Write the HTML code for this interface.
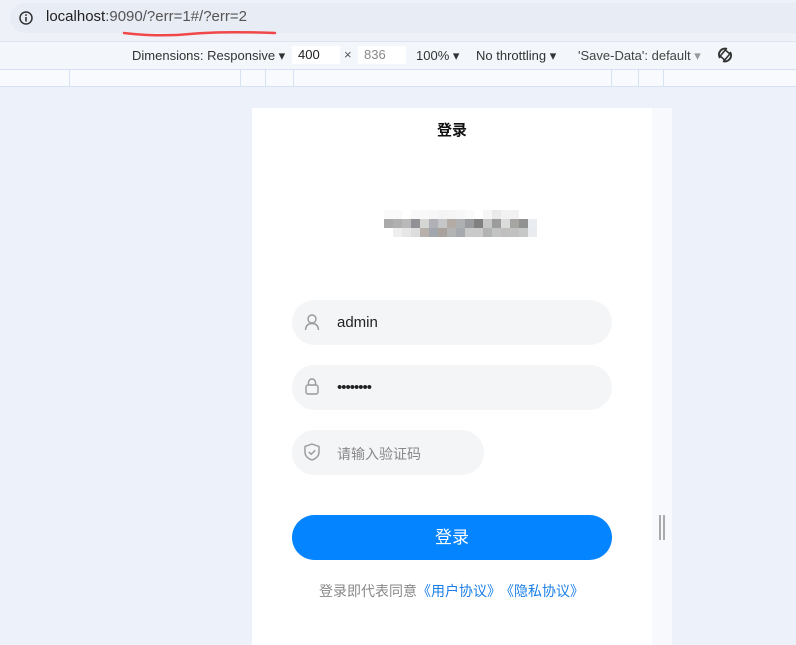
<!DOCTYPE html>
<html><head><meta charset="utf-8"><style>
*{margin:0;padding:0;box-sizing:border-box}
body{width:796px;height:645px;overflow:hidden;background:#edf1f9;font-family:"Liberation Sans","Noto Sans CJK SC",sans-serif;position:relative}
.abs{position:absolute}
.g i{display:block}
</style></head><body>
<div class="abs" style="left:0;top:0;width:796px;height:40px;background:#eef1f8"></div>
<div class="abs" style="left:10px;top:3px;width:786px;height:30px;background:#e8ecf5;border-radius:15px 0 0 15px"></div>
<svg class="abs" style="left:18px;top:10px" width="16" height="16" viewBox="0 0 16 16"><circle cx="8" cy="8" r="6" fill="none" stroke="#333" stroke-width="1.5"/><rect x="7.2" y="7" width="1.6" height="4.5" fill="#333"/><rect x="7.2" y="4.3" width="1.6" height="1.6" fill="#333"/></svg>
<div class="abs" style="left:46px;top:8px;font-size:15px;color:#1f1f1f;white-space:nowrap">localhost<span style="color:#555">:9090/?err=1#/?err=2</span></div>
<svg class="abs" style="left:120px;top:26px" width="160" height="14"><path d="M4 7 Q40 11 70 8 T155 7" stroke="#f04848" stroke-width="2.5" fill="none" stroke-linecap="round"/></svg>
<div class="abs" style="left:0;top:41px;width:796px;height:28px;background:#f3f6fb;border-top:1px solid #dfe4ee"></div>
<div class="abs" style="left:132px;top:48px;font-size:13px;color:#333;white-space:nowrap">Dimensions: Responsive ▾</div>
<div class="abs" style="left:292px;top:46px;width:48px;height:18px;background:#fff;font-size:13px;padding:1px 6px;color:#222">400</div>
<div class="abs" style="left:344px;top:47px;font-size:13px;color:#555">×</div>
<div class="abs" style="left:358px;top:46px;width:48px;height:18px;background:#fff;font-size:13px;padding:1px 6px;color:#888">836</div>
<div class="abs" style="left:416px;top:48px;font-size:13px;color:#333;white-space:nowrap">100% ▾</div>
<div class="abs" style="left:476px;top:48px;font-size:13px;color:#333;white-space:nowrap">No throttling ▾</div>
<div class="abs" style="left:578px;top:48px;font-size:13px;color:#444;white-space:nowrap">'Save-Data': default <span style="color:#999">▾</span></div>
<svg class="abs" style="left:715px;top:45px" width="20" height="20" viewBox="0 0 20 20"><g fill="none" stroke="#333" stroke-width="2"><path d="M5 13 A6 6 0 0 1 12 4"/><path d="M15 7 A6 6 0 0 1 8 16"/><rect x="7" y="6" width="6" height="8" transform="rotate(40 10 10)" stroke-width="1.6"/></g></svg>
<div class="abs" style="left:0;top:69px;width:796px;height:18px;background:#f8fafd;border-top:1px solid #d6e2f3;border-bottom:1px solid #d6e2f3"></div>
<div class="abs" style="left:69px;top:69px;width:1px;height:18px;background:#d6e2f3"></div>
<div class="abs" style="left:240px;top:69px;width:1px;height:18px;background:#d6e2f3"></div>
<div class="abs" style="left:265px;top:69px;width:1px;height:18px;background:#d6e2f3"></div>
<div class="abs" style="left:293px;top:69px;width:1px;height:18px;background:#d6e2f3"></div>
<div class="abs" style="left:611px;top:69px;width:1px;height:18px;background:#d6e2f3"></div>
<div class="abs" style="left:638px;top:69px;width:1px;height:18px;background:#d6e2f3"></div>
<div class="abs" style="left:663px;top:69px;width:1px;height:18px;background:#d6e2f3"></div>

<div class="abs" style="left:252px;top:108px;width:400px;height:537px;background:#fff"></div>
<div class="abs" style="left:652px;top:108px;width:20px;height:537px;background:#f7f9fd"></div>
<div class="abs" style="left:659px;top:515px;width:2px;height:25px;background:#aaa"></div>
<div class="abs" style="left:663px;top:515px;width:2px;height:25px;background:#aaa"></div>
<div class="abs" style="left:252px;top:119px;width:400px;text-align:center;font-size:15px;font-weight:bold;color:#111">登录</div>

<div class="abs g" style="left:384px;top:210px;display:grid;grid-template-columns:repeat(17,9px);grid-template-rows:repeat(3,9px)">
<i style="background:#fafafa"></i><i style="background:#fafafa"></i><i style="background:#fff"></i><i style="background:#f9f9f9"></i><i style="background:#f8f8f8"></i><i style="background:#f7f7f7"></i><i style="background:#f4f4f4"></i><i style="background:#f5f5f5"></i><i style="background:#f7f7f7"></i><i style="background:#fafafa"></i><i style="background:#fff"></i><i style="background:#f6f6f6"></i><i style="background:#e9eaec"></i><i style="background:#f2f2f2"></i><i style="background:#f2f2f2"></i><i style="background:#fff"></i><i style="background:#fff"></i>
<i style="background:#aaa"></i><i style="background:#b0b0b0"></i><i style="background:#b9b9b9"></i><i style="background:#929296"></i><i style="background:#d5d7d5"></i><i style="background:#b0b0b6"></i><i style="background:#c4c6c7"></i><i style="background:#b3aba5"></i><i style="background:#aeb0b1"></i><i style="background:#9a9b9e"></i><i style="background:#808080"></i><i style="background:#c7c7c7"></i><i style="background:#9c9c9c"></i><i style="background:#dadcdb"></i><i style="background:#a7a5a1"></i><i style="background:#919191"></i><i style="background:#e9edf2"></i>
<i style="background:#fff"></i><i style="background:#eee"></i><i style="background:#e6e6e6"></i><i style="background:#ddd"></i><i style="background:#b8b0aa"></i><i style="background:#a2a6ad"></i><i style="background:#aaa39d"></i><i style="background:#b2b3b3"></i><i style="background:#a6a9ae"></i><i style="background:#c9c9c9"></i><i style="background:#cacaca"></i><i style="background:#b2b3b4"></i><i style="background:#c2c3c3"></i><i style="background:#c0bfbd"></i><i style="background:#c1c1c1"></i><i style="background:#c6c7c7"></i><i style="background:#e9ebee"></i>
</div>

<div class="abs" style="left:292px;top:300px;width:320px;height:45px;background:#f4f5f7;border-radius:23px"></div>
<svg class="abs" style="left:302px;top:312px" width="20" height="20" viewBox="0 0 20 20"><g fill="none" stroke="#999" stroke-width="1.4"><circle cx="10" cy="7" r="4"/><path d="M3.5 18 Q4 11.5 10 11.5 Q16 11.5 16.5 18"/></g></svg>
<div class="abs" style="left:337px;top:314px;font-size:15px;color:#222">admin</div>

<div class="abs" style="left:292px;top:365px;width:320px;height:45px;background:#f4f5f7;border-radius:23px"></div>
<svg class="abs" style="left:302px;top:376px" width="20" height="20" viewBox="0 0 20 20"><g fill="none" stroke="#999" stroke-width="1.4"><rect x="4" y="9" width="12" height="9" rx="2"/><path d="M6.5 9 V6.5 a3.5 3.5 0 0 1 7 0 V9"/></g></svg>
<div class="abs" style="left:337px;top:379px;font-size:15px;color:#222;letter-spacing:-1px">••••••••</div>

<div class="abs" style="left:292px;top:430px;width:192px;height:45px;background:#f4f5f7;border-radius:23px"></div>
<svg class="abs" style="left:302px;top:442px" width="20" height="20" viewBox="0 0 20 20"><g fill="none" stroke="#999" stroke-width="1.4"><path d="M10 2 L17 4.5 V10 Q17 15.5 10 18 Q3 15.5 3 10 V4.5 Z"/><path d="M6.8 10 L9.2 12.3 L13.3 8.3"/></g></svg>
<div class="abs" style="left:337px;top:444px;font-size:14px;color:#888">请输入验证码</div>

<div class="abs" style="left:292px;top:515px;width:320px;height:45px;background:#0484fe;border-radius:23px;color:#fff;font-size:17px;text-align:center;line-height:45px">登录</div>
<div class="abs" style="left:319px;top:581px;font-size:14px;color:#888;white-space:nowrap">登录即代表同意<span style="color:#1a7fe8">《用户协议》</span><span style="color:#1a7fe8;margin-left:6px">《隐私协议》</span></div>
</body></html>
